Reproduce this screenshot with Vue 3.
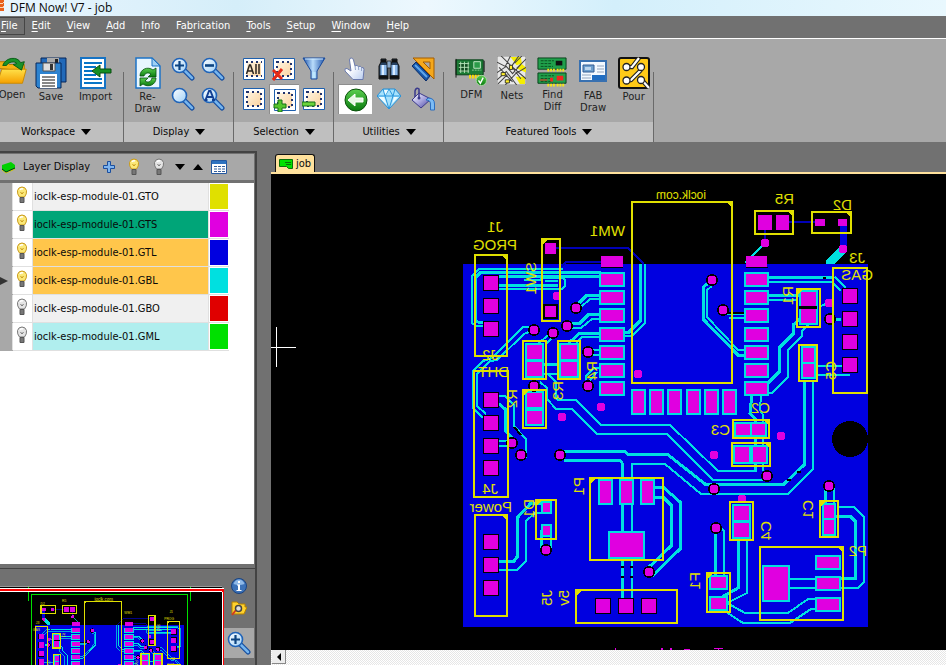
<script setup>
import { ref } from 'vue'

const menus = [
  ['', 'F', 'ile'], ['', 'E', 'dit'], ['', 'V', 'iew'], ['', 'A', 'dd'], ['', 'I', 'nfo'],
  ['Fa', 'b', 'rication'], ['', 'T', 'ools'], ['', 'S', 'etup'], ['', 'W', 'indow'], ['', 'H', 'elp']
]

const groups = [
  { name: 'Workspace', cls: 'workspace', big: [
    { icon: 'open', label: 'Open' }, { icon: 'save', label: 'Save' }, { icon: 'import', label: 'Import' }
  ] },
  { name: 'Display', cls: 'display', big: [{ icon: 'redraw', label: 'Re-Draw' }],
    small: ['zoom-in', 'zoom-out', 'zoom', 'zoom-all'] },
  { name: 'Selection', cls: 'selection', small: ['sel-all', 'sel-clear', 'filter', 'sel', 'sel-add', 'sel-sub'], active: 'sel-add' },
  { name: 'Utilities', cls: 'utilities', small: ['hand', 'binoculars', 'measure', 'back', 'gem', 'bucket'], active: 'back' },
  { name: 'Featured Tools', cls: 'featured', big: [
    { icon: 'dfm', label: 'DFM' }, { icon: 'nets', label: 'Nets' }, { icon: 'diff', label: 'Find Diff' },
    { icon: 'fab', label: 'FAB Draw' }, { icon: 'pour', label: 'Pour' }
  ] }
]

const layers = ref([
  { ext: 'GTO', on: true, row: '#f0f0f0', color: '#e0e000' },
  { ext: 'GTS', on: true, row: '#00a578', color: '#e000e0' },
  { ext: 'GTL', on: true, row: '#ffc64b', color: '#0000e0' },
  { ext: 'GBL', on: true, row: '#ffc64b', color: '#00e0e0', current: true },
  { ext: 'GBO', on: false, row: '#f0f0f0', color: '#e00000' },
  { ext: 'GML', on: false, row: '#b0eeee', color: '#00e000' }
])

// Component outlines: x1, y1, x2, y2, notch corner
const outlines = [
  [632, 202, 732, 383, 'r'], [475, 255, 507, 356, 'r'], [542, 239, 560, 321, 'l'],
  [755, 211, 793, 234, 'r'], [812, 212, 851, 233, 'r'], [833, 268, 867, 393, ''],
  [797, 289, 820, 327, 'l'], [799, 345, 817, 381, ''], [733, 420, 769, 438, 'r'],
  [732, 443, 770, 466, 'r'], [523, 341, 546, 379, ''], [558, 341, 580, 379, ''],
  [523, 390, 546, 428, 'l'], [474, 371, 508, 497, ''], [475, 515, 507, 616, 'r'],
  [536, 500, 556, 539, 'l'], [590, 478, 663, 560, 'l'], [576, 590, 677, 623, 'l'],
  [730, 502, 753, 540, ''], [707, 573, 730, 612, 'l'], [820, 501, 838, 537, 'l'],
  [760, 547, 843, 620, 'r']
]

// Surface-mount pads: x, y, w, h, clearance kind
const pads = [
  [545, 243, 11, 11, ''], [545, 306, 11, 11, 'k'],
  [758, 215, 14, 15, ''], [776, 215, 13, 15, ''], [815, 219, 10, 7, ''], [838, 219, 9, 7, ''],
  [801, 292, 15, 14, 'c'], [801, 309, 15, 14, 'c'],
  [527, 345, 15, 14, 'c'], [527, 362, 15, 14, 'c'], [561, 345, 16, 14, 'c'], [561, 362, 16, 14, 'c'],
  [527, 393, 15, 14, 'c'], [527, 411, 15, 13, 'c'],
  [803, 348, 11, 14, 'c'], [803, 364, 11, 13, 'c'],
  [736, 424, 14, 11, 'c'], [752, 424, 13, 11, 'c'], [735, 447, 14, 15, 'c'], [753, 447, 13, 15, 'c'],
  [543, 503, 7, 9, 'c'], [543, 526, 7, 9, 'c'],
  [600, 481, 11, 22, 'c'], [621, 481, 11, 22, 'c'], [642, 481, 11, 22, 'c'], [610, 533, 33, 24, 'c'],
  [734, 506, 15, 14, 'c'], [734, 523, 15, 14, 'c'],
  [711, 577, 15, 11, 'c'], [711, 598, 15, 11, 'c'],
  [824, 505, 10, 13, 'c'], [824, 520, 10, 14, 'c'],
  [764, 567, 24, 33, 'c'], [817, 557, 22, 11, 'c'], [817, 578, 22, 11, 'c'], [817, 599, 22, 11, 'c']
]
for (let i = 0; i < 8; i++) {
  pads.push([601, 256 + Math.round(i * 18.15), 22, 11, i ? 'c' : ''])
  pads.push([746, 256 + Math.round(i * 18.15), 21, 11, i ? 'c' : ''])
}
for (let i = 0; i < 6; i++) pads.push([633 + Math.round(i * 18.2), 391, 11, 22, 'c'])

// Header pins, by centre
const pins = [
  [491, 283], [491, 306], [491, 329], [491, 400], [491, 423], [491, 446], [491, 468],
  [491, 542], [491, 565], [491, 588], [850, 296], [850, 319], [850, 342], [850, 365],
  [603, 606], [626, 606], [649, 606]
]

// Vias: centre, isolated from the pour or not
const vias = [
  [765, 243], [843, 249], [712, 280, 1], [723, 310, 1], [829, 303], [830, 319, 1], [557, 296],
  [576, 308, 1], [567, 326, 1], [534, 330, 1], [553, 333, 1], [588, 352, 1], [588, 386, 1],
  [638, 374], [601, 407], [562, 417], [534, 386, 1], [512, 443, 1], [521, 455, 1], [560, 455, 1],
  [781, 436], [714, 455], [767, 476, 1], [714, 489, 1], [829, 486, 1], [742, 499], [716, 528, 1],
  [546, 550, 1], [649, 572, 1]
]

// Routed clearances: width, points
const traces = [
  [2, '563,269 479,269 472,276 472,323 476,326 484,326'],
  [3, '601,272 481,272 475,278 475,320 478,322 484,322'],
  [3, '499,276 600,276'],
  [3, '499,285 558,285'], [2, '499,289 562,289 565,286 565,280 562,277'],
  [2, '524,280 540,280 543,278 562,278'], [2, '545,281 558,281'],
  [3, '640,264 640,321 629,332 623,332'], [2, '645,264 645,323 632,336 623,336'],
  [3, '599,295 587,295 577,305'], [2, '599,299 590,299 580,308'],
  [3, '599,314 589,314 580,323 571,323'], [2, '599,319 592,319 581,328 571,328'],
  [3, '599,333 580,333 571,341'], [2, '599,337 582,337 576,343'],
  [2, '530,327 523,327 492,358 483,361 473,371 473,408 483,418'],
  [2, '531,331 524,334 497,360 490,361 477,374 477,406 486,414'],
  [2, '549,334 538,344'], [2, '553,337 545,345'], [2, '571,341 562,350'],
  [2, '593,350 600,350'], [2, '593,355 600,355'], [2, '586,380 586,376 594,368 600,368'],
  [2, '589,381 597,372'],
  [3, '542,364 562,364'], [2, '542,374 562,374'],
  [2, '548,374 556,382 556,397 558,400 576,400 601,425 670,425 718,471 757,471'],
  [2, '540,382 547,388 547,399 556,409 572,409 597,434 667,434 713,480 764,480'],
  [3, '564,451 624,451 628,454 667,454 705,484 784,484 804,465 804,381'],
  [3, '564,460 620,460 622,463 622,480'],
  [2, '632,480 632,464 665,464 701,494 788,494 813,469 813,381'],
  [3, '622,503 622,598'], [2, '632,503 632,598'],
  [3, '653,487 663,487 680,502 680,549 652,576'], [3, '653,497 663,497 671,505 671,546 648,568'],
  [2, '817,366 842,366'], [2, '815,375 850,375'],
  [3, '769,277 833,277'], [2, '835,277 846,288'], [2, '769,282 832,282 841,291'],
  [3, '769,295 800,295'], [2, '769,300 798,300'],
  [3, '802,317 793,325 793,334 779,348 779,372 768,383'],
  [2, '808,325 802,331 802,336 788,350 788,377 772,393 767,393'],
  [3, '710,282 703,287 703,319 738,355 746,355'], [2, '712,286 707,290 707,317 738,350 746,350'],
  [2, '727,314 744,314'], [2, '729,318 744,318'], [2, '821,306 828,303'], [3, '834,319 841,319'],
  [3, '752,394 750,413 755,419 755,471'], [2, '761,394 760,410 763,415 763,471'],
  [2, '499,396 505,396 514,405 514,426 526,439 526,458'], [3, '499,404 505,409 505,430 512,438'],
  [2, '499,441 507,441'], [2, '499,446 508,446'],
  [3, '499,561 514,561 517,557 517,518 531,503 543,503'], [2, '499,570 517,570 526,561 526,521 535,513 551,513'],
  [3, '541,530 541,549'], [2, '551,530 551,548'],
  [3, '738,540 738,588 722,597'], [2, '747,540 747,593 727,603 745,613 788,613 808,599 817,599'],
  [2, '723,610 743,623 790,623 811,609 817,609'],
  [3, '715,532 715,577'], [2, '720,527 724,531 724,577'],
  [2, '788,579 817,579'], [2, '788,588 817,588'],
  [3, '835,516 850,516 855,521 855,578 840,578'], [2, '837,507 854,507 864,517 864,582 858,588 840,588'],
  [3, '825,488 825,503'], [2, '834,488 834,503'], [2, '765,243 745,263']
]

// Silkscreen reference names; h = right edge + baseline, v = baseline x + top
const names = [
  ['h', 503, 232, 'J1'], ['h', 517, 250, 'PROG'], ['h', 625, 236, 'WM1'], ['h', 794, 204, 'R5'],
  ['h', 852, 210, 'D2'], ['h', 865, 263, 'J3'], ['h', 873, 280, 'GAS'], ['h', 770, 413, 'C2'],
  ['h', 730, 435, 'C3'], ['h', 498, 360, 'J2'], ['h', 509, 377, 'DHT'], ['h', 498, 494, 'J4'],
  ['h', 512, 512, 'Power'], ['h', 867, 556, 'P2'],
  ['v', 525, 262, 'SW1'], ['v', 782, 286, 'R1'], ['v', 825, 361, 'C5'], ['v', 506, 389, 'R2'],
  ['v', 552, 381, 'R3'], ['v', 586, 361, 'R4'], ['v', 573, 477, 'P1'], ['v', 523, 499, 'D1'],
  ['v', 541, 590, 'J5'], ['v', 558, 590, '5v'], ['v', 760, 521, 'C4'], ['v', 689, 572, 'F1'],
  ['v', 802, 500, 'C1']
]

const place = (n) => (n[0] === 'h' ? `matrix(-1 0 0 1 ${n[1]} ${n[2]})` : `matrix(0 1 1 0 ${n[1] + 11} ${n[2]})`)
const notch = (o) => (o[4] === 'r'
  ? `M${o[2] - 6} ${o[1]}H${o[2]}V${o[1] + 6}Z`
  : `M${o[0] + 6} ${o[1]}H${o[0]}V${o[1] + 6}Z`)
</script>

<template>
  <div class="app">
    <svg class="defs" aria-hidden="true">
      <defs>
        <linearGradient id="gBlue" x1="0" y1="0" x2="1" y2="1"><stop offset="0" stop-color="#fff" /><stop offset="1" stop-color="#9ed0f8" /></linearGradient>
        <linearGradient id="gFold" x1="0" y1="0" x2="0" y2="1"><stop offset="0" stop-color="#ffe14a" /><stop offset="1" stop-color="#f5a000" /></linearGradient>
        <linearGradient id="gGreen" x1="0" y1="0" x2="0" y2="1"><stop offset="0" stop-color="#5ccf50" /><stop offset="1" stop-color="#08790d" /></linearGradient>
        <linearGradient id="gPeach" x1="0" y1="0" x2="1" y2="1"><stop offset="0" stop-color="#fff4e0" /><stop offset="1" stop-color="#fbd3a0" /></linearGradient>
        <linearGradient id="gFun" x1="0" y1="0" x2="1" y2="0"><stop offset="0" stop-color="#1b50a8" /><stop offset=".45" stop-color="#b9ddfb" /><stop offset="1" stop-color="#1b50a8" /></linearGradient>
        <linearGradient id="gHand" x1="0" y1="0" x2="1" y2="1"><stop offset=".4" stop-color="#fff" /><stop offset="1" stop-color="#b9cdf0" /></linearGradient>
        <linearGradient id="gPail" x1="0" y1="0" x2="1" y2="1"><stop offset="0" stop-color="#fff" /><stop offset=".5" stop-color="#a9a6de" /><stop offset="1" stop-color="#3e3a98" /></linearGradient>

        <symbol id="glass" viewBox="0 0 24 24">
          <path d="M14 14l7 7" stroke="#174fa0" stroke-width="5" stroke-linecap="round" /><path d="M14 14l7 7" stroke="#75b5ee" stroke-width="2.500" stroke-linecap="round" />
          <circle cx="8.500" cy="8.500" r="7" fill="url(#gBlue)" stroke="#1f63b8" stroke-width="1.600" />
        </symbol>
        <symbol id="i-zoom" viewBox="0 0 24 24"><use href="#glass" /></symbol>
        <symbol id="i-zoom-in" viewBox="0 0 24 24"><use href="#glass" /><path d="M8.500 4v9M4 8.500h9" stroke="#0c4380" stroke-width="2.200" /></symbol>
        <symbol id="i-zoom-out" viewBox="0 0 24 24"><use href="#glass" /><path d="M4 8.500h9" stroke="#0c4380" stroke-width="2.600" /></symbol>
        <symbol id="i-zoom-all" viewBox="0 0 24 24"><use href="#glass" /><path d="M4.500 13L8 4h1.500l3.500 9M6.500 10h4.500M3.500 13h3M11 13h3" fill="none" stroke="#123f92" stroke-width="1.900" /></symbol>

        <symbol id="i-open" viewBox="4 0 28 32">
          <path d="M0 12V5h10l3 3h16v7z" fill="#f5b312" stroke="#b67a00" /><path d="M0 28L5 13h26l-4 15z" fill="url(#gFold)" stroke="#c98900" />
          <path d="M6 9C9 0 22-1 25 6l4-1-3 9-9-6 4-1C19 4 12 5 10 9z" fill="#18922a" stroke="#075c14" />
        </symbol>
        <symbol id="i-save" viewBox="0 0 32 32">
          <path d="M6 1h25v24H6z" fill="#2169b9" stroke="#06265a" /><path d="M12 1h12v8H12z" fill="#aaa" /><path d="M20 2h3v6h-3z" fill="#222" />
          <path d="M1 6h25v25H3l-2-2z" fill="#2d83d0" stroke="#06265a" /><path d="M8 6h12v8H8z" fill="#ddd" stroke="#555" /><path d="M15 7h3v6h-3z" fill="#333" />
          <path d="M5 17h17v14H5z" fill="#fff" /><path d="M7 20h13M7 23h13M7 26h13M7 29h13" stroke="#111" />
        </symbol>
        <symbol id="i-import" viewBox="0 0 32 32">
          <path d="M1 1h24v30H1z" fill="#fff" stroke="#1673c4" stroke-width="2" /><path d="M4 6h18M4 10h12M4 14h9M4 18h12M4 22h18M4 26h18" stroke="#0876c8" stroke-width="2" />
          <path d="M31 12v4H20v4l-8-6 8-6v4z" fill="#159023" stroke="#084d10" />
        </symbol>
        <symbol id="i-redraw" viewBox="0 0 26 32">
          <path d="M1 1h16l8 8v22H1z" fill="#e8f6ff" stroke="#1c73c6" stroke-width="1.500" /><path d="M17 1v8h8z" fill="#9fd0f5" stroke="#1c73c6" />
          <path d="M5 19c0-7 8-10 13-6l3-2v9h-8l3-3c-3-2-6-1-7 2z" fill="url(#gGreen)" stroke="#064f0e" stroke-width=".8" />
          <path d="M21 21c0 7-8 10-13 6l-3 2v-8h8l-3 3c3 2 6 1 7-3z" fill="url(#gGreen)" stroke="#064f0e" stroke-width=".8" />
        </symbol>

        <symbol id="i-sel" viewBox="0 0 24 24">
          <path d="M1.500 1.500h21v21h-21z" fill="#fff" stroke="#1d5fae" /><path d="M5 5h14v14H5z" fill="url(#gPeach)" />
          <path d="M5 5h14v14H5z" fill="none" stroke="#20336e" stroke-width="2" stroke-dasharray="2 3" />
        </symbol>
        <symbol id="i-sel-all" viewBox="0 0 24 24"><path d="M1.500 1.500h21v21h-21z" fill="#fff" stroke="#1d5fae" /><path d="M5 5h14v14H5z" fill="url(#gPeach)" /><path d="M4 5h16M4 19h16" fill="none" stroke="#20336e" stroke-width="2" stroke-dasharray="2 3" /><path d="M4.500 17L7.500 8h1l3 9M5.500 14h5M14 7v10M17 7v10" fill="none" stroke="#2b2520" stroke-width="1.500" /></symbol>
        <symbol id="i-sel-clear" viewBox="0 0 24 24"><use href="#i-sel" /><path d="M1 13l9 9M10 12L1 23" stroke="#e42a18" stroke-width="3" /></symbol>
        <symbol id="i-sel-add" viewBox="0 0 24 24"><use href="#i-sel" /><path d="M5 12h4v4h4v4H9v4H5v-4H1v-4h4z" fill="#55c52c" stroke="#167016" /></symbol>
        <symbol id="i-sel-sub" viewBox="0 0 24 24"><use href="#i-sel" /><path d="M0 15h13v4H0z" fill="#6bd33a" stroke="#167016" /></symbol>
        <symbol id="i-filter" viewBox="0 0 24 24"><path d="M1 1h22l-8 13v8H9v-8z" fill="url(#gFun)" stroke="#194a9c" /><path d="M3 2h18" stroke="#d4edff" /><path d="M10.500 15h3v6h-3z" fill="#bce7ff" /></symbol>

        <symbol id="i-hand" viewBox="0 0 24 24"><path d="M8 14L6.500 3q0-2 1.700-2t2.300 2l1.500 6q2-1.500 3.500.5 2-1 3 1 2.500-.5 2.500 2L20 22.500H10L2 14q-1-3 2-2.500z" fill="url(#gHand)" stroke="#6979ad" /><path d="M12 9l.5 4M15.500 10l.2 3M18.500 11v3" stroke="#93a5cc" /></symbol>
        <symbol id="i-binoculars" viewBox="0 0 24 24"><path d="M4 2h5v3l2 3v14H2V9l2-4zM15 2h5v3l2 4v13h-9V8l2-3z" fill="#27405f" stroke="#111" /><path d="M10 4h4v7h-4z" fill="#8aa9cb" stroke="#222" stroke-width=".8" /><path d="M6.500 8v10M17.500 8v10" stroke="#8db9ea" stroke-width="6" /><path d="M6 8v10M17 8v10" stroke="#d8ebff" stroke-width="2" /><path d="M2 20h9M13 20h9M4 4h5M15 4h5" stroke="#111" stroke-width="3" /></symbol>
        <symbol id="i-measure" viewBox="0 0 24 24"><path d="M2 1h21v21z" fill="#f5a81c" stroke="#a45c00" /><path d="M12 5h7v7z" fill="#a8a8a8" stroke="#a45c00" /><path d="M1 9l4-4 14 14-4 5z" fill="#1757a8" stroke="#082c6a" /><path d="M4 8l12 12" stroke="#60a7eb" stroke-width="2" /></symbol>
        <symbol id="i-back" viewBox="0 0 24 24"><circle cx="12" cy="12" r="11" fill="url(#gGreen)" stroke="#09500a" /><path d="M19 10v4h-8v4l-7-6 7-6v4z" fill="#e7f7e4" stroke="#fff" /></symbol>
        <symbol id="i-gem" viewBox="0 0 24 24"><path d="M6 2h12l6 7-12 13L0 9z" fill="#a6e2fd" stroke="#278fd5" /><path d="M6 2l2 7 4-7 4 7 2-7M0 9h24M8 9l4 13 4-13" fill="none" stroke="#2b96dc" /><path d="M7 3h4L8.500 8zM1.500 10H7l3 8zM17 10h4l-6 7z" fill="#effcff" /></symbol>
        <symbol id="i-bucket" viewBox="0 0 24 24"><path d="M8 6l12 6-10 9-9-8z" fill="url(#gPail)" stroke="#3c3a8c" /><path d="M4 10V4q1-4 4-2v9" fill="none" stroke="#39398c" stroke-width="1.500" /><circle cx="8" cy="11" r="1.500" fill="#39398c" /><path d="M17 11q6.500 0 6.500 6v6h-4v-6q0-4-4.500-4z" fill="#7cbcf5" stroke="#2b6ec0" /></symbol>

        <symbol id="i-dfm" viewBox="0 0 34 32">
          <path d="M1 3h29v16H1z" fill="#1b7c35" stroke="#064019" /><path d="M1 2v20M31 4v12" stroke="#111" />
          <path d="M4 6h11v10H4z" fill="#114b20" /><path d="M4 7h11M4 11h11M4 15h11M6 5v12M10 5v12M14 5v12" stroke="#b6e6ba" /><path d="M20 5h7v7h-7z" fill="#2a9b48" stroke="#c5ebc9" />
          <path d="M18 14h10" stroke="#8fd498" stroke-dasharray="2 1" /><path d="M15 21h11" stroke="#ffdf00" stroke-width="4" stroke-dasharray="2 1" /><circle cx="28" cy="25" r="5.500" fill="url(#gGreen)" stroke="#a6d8a0" /><path d="M25 25l2 3 3-6" fill="none" stroke="#fff" stroke-width="1.500" />
        </symbol>
        <symbol id="i-nets" viewBox="0 0 28 28">
          <path d="M0 0h28v28H0z" fill="#e8e8e8" stroke="#888" /><path d="M13 1h10l1 6-5 2zM19 12l4-5 5 4v5zM18 20h9v7h-5z" fill="#f5ee00" />
          <path d="M0 6l8 4 5-10M0 16l9-6 6 7 8-9M4 0l9 9 15 13M0 23l9-8 10 13M8 28l10-11 10-6M2 11l13 14M1 27l9-9M21 0l-7 10 9 12M24 0l-7 7M28 3l-9 9" fill="none" stroke="#444" />
          <path d="M4 16h4v3H4zM12 9h3v4h-3zM8 23h4v3H8z" fill="#ffef28" stroke="#222" stroke-width=".8" />
        </symbol>
        <symbol id="i-diff" viewBox="0 0 32 32">
          <path d="M1 1h30v12H1zM1 17h30v11H1z" fill="#20a04b" stroke="#063f19" /><path d="M4 4h14M4 7h12M4 10h13M4 20h14M4 23h10M4 26h12" stroke="#094e20" stroke-dasharray="3 1" />
          <path d="M20 4h7v5h-7z" fill="#111" /><path d="M21 20h7v5h-7zM3 24h8v1H3zM14 22h3v4h-3z" fill="#f02620" /><path d="M11 14h8M21 14h8M11 30h8M21 30h8" stroke="#f5e618" stroke-width="3" stroke-dasharray="2 1" />
        </symbol>
        <symbol id="i-fab" viewBox="0 0 28 22"><path d="M1 1h26v20H1z" fill="#f3f9ff" stroke="#3870b0" stroke-width="2" /><path d="M4 5h11v7H4z" fill="#6d9fce" stroke="#315a92" /><path d="M6 7h6v3H6z" fill="#bcd6ee" /><path d="M18 6h7M18 9h7M18 12h7M3 15h9M3 18h9" stroke="#93a5bd" /><path d="M13 15h13v5H13z" fill="#1f6dc2" /></symbol>
        <symbol id="i-pour" viewBox="0 0 32 32">
          <rect x="1" y="1" width="30" height="30" rx="2" fill="#ffca18" stroke="#111" stroke-width="2" />
          <g fill="none" stroke="#222" stroke-width="4.400"><path d="M9 10h5l7-9M8 24l5-1 10-10M23 22l8 9" /></g><g fill="none" stroke="#fff" stroke-width="2.200"><path d="M9 10h5l7-9M8 24l5-1 10-10M23 22l8 9" /></g>
          <g fill="#fff" stroke="#222" stroke-width="1.300"><circle cx="8.500" cy="10" r="3.500" /><circle cx="23" cy="10" r="3.500" /><circle cx="8.500" cy="23.500" r="3.500" /><circle cx="23" cy="23" r="3.500" /></g>
        </symbol>

        <symbol id="i-bulb-on" viewBox="0 0 12 18"><path d="M3.500 11Q1 8 1.500 4.500 2.500 1 6 1t4.500 3.500Q11 8 8.500 11z" fill="#fbe878" stroke="#c99a1a" /><path d="M4 4q1-2 3-1" stroke="#fff" stroke-width="1.500" fill="none" /><path d="M4.500 6L6 8l1.500-2" fill="none" stroke="#c99a1a" /><path d="M4 11.500h4v5H4z" fill="#777" stroke="#555" /></symbol>
        <symbol id="i-bulb-off" viewBox="0 0 12 18"><path d="M3.500 11Q1 8 1.500 4.500 2.500 1 6 1t4.500 3.500Q11 8 8.500 11z" fill="#e4e4e4" stroke="#777" /><path d="M4 4q1-2 3-1" stroke="#fff" stroke-width="1.500" fill="none" /><path d="M4.500 6L6 8l1.500-2" fill="none" stroke="#777" /><path d="M4 11.500h4v5H4z" fill="#777" stroke="#555" /></symbol>

        <g id="pcb" shape-rendering="crispEdges">
          <rect class="blue" x="463" y="264" width="405" height="363" />
          <rect x="633" y="203" width="98" height="61" />
          <circle cx="850" cy="439" r="18" />
          <path class="track" d="M556 248h72l16 16M601 262h-35l-5 5M789 222h27M765 230v13" />
          <path class="blue" d="M840 226h7v22h-7z" />
          <path class="cyan" d="M841 245l6 6-13 13h-8v-4z" />
          <polyline v-for="(t, i) in traces" :key="'t' + i" class="trace" :points="t[1]" :stroke-width="t[0]" />
          <path d="M621 567h3M630 567h3M621 577h3M630 577h3M787 480h4M797 472h4M823 278h3M514 427l7 8M726 313h18" stroke="#000" stroke-width="2" />
          <g v-for="(p, i) in pads" :key="'p' + i">
            <rect v-if="p[4]" :class="p[4] === 'c' ? 'cyan' : 'dark'" :x="p[0] - 2" :y="p[1] - 2" :width="p[2] + 4" :height="p[3] + 4" />
          </g>
          <path d="M799 306h18v3h-18zM601 267h22v1h-22zM746 267h22v1h-22z" />
          <rect v-for="(p, i) in pads" :key="'q' + i" class="mag" :x="p[0]" :y="p[1]" :width="p[2]" :height="p[3]" />
          <g v-for="(p, i) in pins" :key="'n' + i">
            <rect :x="p[0] - 8" :y="p[1] - 8" width="16" height="16" /><rect class="mag" :x="p[0] - 7" :y="p[1] - 7" width="14" height="14" />
          </g>
          <g v-for="(v, i) in vias" :key="'v' + i">
            <circle v-if="v[2]" :cx="v[0]" :cy="v[1]" r="6" /><circle class="mag" :cx="v[0]" :cy="v[1]" r="4.500" />
          </g>
          <g v-for="(o, i) in outlines" :key="'o' + i">
            <rect class="silk" :x="o[0]" :y="o[1]" :width="o[2] - o[0]" :height="o[3] - o[1]" />
            <path v-if="o[4]" class="yellow" :d="notch(o)" />
          </g>
          <g class="names">
            <text v-for="n in names" :key="n[3]" :transform="place(n)">{{ n[3] }}</text>
            <text class="mini" transform="matrix(-1 0 0 1 706 199)">ioclk.com</text>
          </g>
        </g>
      </defs>
    </svg>

    <header class="title"><i class="logo"></i><h1>DFM Now! V7 - job</h1></header>

    <nav class="menu">
      <button v-for="(m, i) in menus" :key="i" :class="{ open: i === 0 }">{{ m[0] }}<u>{{ m[1] }}</u>{{ m[2] }}</button>
    </nav>

    <div class="ribbon">
      <section v-for="g in groups" :key="g.name" class="group" :class="g.cls">
        <div class="tools">
          <button v-for="b in g.big" :key="b.icon" class="big" :class="b.icon">
            <svg><use :href="'#i-' + b.icon" /></svg><span>{{ b.label }}</span>
          </button>
          <div v-if="g.small" class="smalls">
            <button v-for="s in g.small" :key="s" :class="{ active: s === g.active }" :aria-label="s"><svg><use :href="'#i-' + s" /></svg></button>
          </div>
        </div>
        <button class="caption">{{ g.name }}<i class="down"></i></button>
      </section>
    </div>

    <main class="work">
      <aside class="side">
        <div class="side-head">
          <svg class="stack" viewBox="0 0 14 14"><path d="M0 8l4 3 9-4v2l-9 4-4-3z" fill="#00d0e0" /><path d="M0 10l4 3 9-4" fill="none" stroke="#ddc400" /><path d="M0 5l9-3 4 3v3l-9 4-4-3z" fill="#00d000" /><path d="M0 9l4 3 9-4" fill="none" stroke="#073807" /></svg>
          <h2>Layer Display</h2>
          <button class="plus" aria-label="Add layer"><svg viewBox="0 0 12 12"><path d="M4.500.5h3v4h4v3h-4v4h-3v-4h-4v-3h4z" fill="#7eb5f0" stroke="#1b4e9e" /></svg></button>
          <button class="lamp" aria-label="All on"><svg><use href="#i-bulb-on" /></svg></button>
          <button class="lamp" aria-label="All off"><svg><use href="#i-bulb-off" /></svg></button>
          <button class="arrow" aria-label="Move down"><i class="down"></i></button>
          <button class="arrow" aria-label="Move up"><i class="up"></i></button>
          <button class="sheet" aria-label="Layer table"><svg viewBox="0 0 16 14"><path d="M.5.500h15v13H.5z" fill="#fff" stroke="#2458a0" /><path d="M1 1h14v3H1z" fill="#2e73c0" /><path d="M3 6.500h11M3 9h11M3 11.500h11" stroke="#345e9c" stroke-dasharray="3 1" /></svg></button>
        </div>
        <div class="list">
          <table>
            <tbody>
              <tr v-for="l in layers" :key="l.ext">
                <td class="mark"><i v-if="l.current"></i></td>
                <td class="bulb"><button :aria-label="'Show ' + l.ext" @click="l.on = !l.on"><svg><use :href="l.on ? '#i-bulb-on' : '#i-bulb-off'" /></svg></button></td>
                <td class="name" :style="{ backgroundColor: l.row }">ioclk-esp-module-01.{{ l.ext }}</td>
                <td class="swatch"><i :style="{ backgroundColor: l.color }"></i></td>
              </tr>
            </tbody>
          </table>
        </div>
        <div class="navigator">
          <svg class="overview" viewBox="0 0 224 79" preserveAspectRatio="xMinYMin slice" shape-rendering="crispEdges">
            <path d="M0 0h222v79H0z" />
            <path d="M28.500 0v15M190.500 0v15M31.500 79V8.500h156V79" fill="none" stroke="#00e000" />
            <use class="tiny" href="#pcb" transform="matrix(-.369 0 0 .37 355 -59)" />
            <path d="M0 0h222v1H0z" fill="#999" /><path d="M0 2h223v4H0z" fill="#fff" /><path d="M0 3h223v2H0z" fill="#f00" />
            <path d="M222 2h2v77h-2z" fill="#fff" /><path d="M223 6h1v73h-1zM222 3h2v3h-2z" fill="#f00" />
          </svg>
          <div class="nav-tools">
            <button aria-label="Information"><svg viewBox="0 0 16 16"><circle cx="8" cy="8" r="7.500" fill="#3c72b8" stroke="#1a4380" /><path d="M2.500 6Q4 1.500 8 1.500T13.500 6Q8 8 2.500 6" fill="#8fb9e8" /><path d="M7 3h2v2H7zM6 6.500h3V12h1.500v1h-5v-1H7V7.500H6z" fill="#fff" /></svg></button>
            <button aria-label="Find file"><svg viewBox="0 0 16 16"><path d="M1 2h5l2 2h6v3h2l-3 7H1z" fill="#ffd22e" stroke="#b58100" /><path d="M1 15l4-5" stroke="#d33a20" stroke-width="2" /><circle cx="7.500" cy="8.500" r="3" fill="#ddd" stroke="#444" stroke-width="1.500" /></svg></button>
            <button class="active" aria-label="Zoom view"><svg><use href="#i-zoom-in" /></svg></button>
          </div>
        </div>
      </aside>

      <section class="doc">
        <div class="tabs"><button><svg viewBox="0 0 14 12"><path d="M.5 1.500h13v9h-4l-2-2h-7z" fill="#00e000" stroke="#087008" /><path d="M6 4.500h6M7 6.500h5" stroke="#087008" /></svg>job</button></div>
        <div class="canvas">
          <svg viewBox="271 174 675 476" preserveAspectRatio="xMinYMin slice">
            <use href="#pcb" />
            <path d="M271 347.500h25M276.500 327v40" stroke="#fff" shape-rendering="crispEdges" />
            <path d="M615 648h1v2h-1zM661 648h2v2h-2zM670 648h2v2h-2zM684 649h6v1h-6zM714 648h9v1h-9zM718 648h1v2h-1z" fill="#e000e0" />
          </svg>
        </div>
        <div class="scroll"><button aria-label="Scroll left"><i></i></button></div>
      </section>
    </main>
  </div>
</template>

<style>
body { overflow: hidden; }
</style>

<style scoped>
.app { display: flex; flex-direction: column; height: 100vh; background: #717171; color: #0a0a0a; font: 11px/14px "DejaVu Sans Condensed", "Noto Sans", sans-serif; overflow: hidden; }
.defs { position: absolute; width: 0; height: 0; }
button { font: inherit; color: inherit; background: none; border: 0; padding: 0; margin: 0; }
button svg { display: block; }
h1, h2 { margin: 0; font-weight: 400; font-size: inherit; }

.title { display: flex; flex: none; height: 16px; background: linear-gradient(90deg, #e8f5fe, #d5eef9 25%, #edf8fe 45%, #d3effb 65%, #e9f8fe); }
.title h1 { font: 12px/16px "Noto Sans", "Open Sans", sans-serif; line-height: 16px; margin-left: 6px; font-family: "Open Sans", sans-serif; }
.logo { width: 4px; height: 11px; background: repeating-linear-gradient(170deg, #e8601c 0 3px, #fbd3b8 3px 4px); }

.menu { display: flex; flex: none; align-items: flex-start; height: 22px; background: #717171; border-bottom: 1px solid #fff; color: #fff; }
.menu button { height: 18px; padding: 0 8px; box-sizing: border-box; line-height: 18px; border-right: 1px solid transparent; margin-top: 1px; margin-right: -1px; }
.menu .open { margin-left: -8px; padding-right: 6px; border: 1px solid #454545; line-height: 16px; }
.menu u { text-underline-offset: 2px; }

.ribbon { display: flex; height: 103px; background: #a8a8a8; border-bottom: 2px solid #717171; flex: none; }
.group { position: relative; display: flex; flex-direction: column; }
.group::after { content: ""; position: absolute; right: 0; top: 33px; bottom: 0; width: 1px; background: #6a6a6a; }
.workspace { width: 124px; }
.display, .utilities { width: 110px; }
.selection { width: 100px; }
.featured { width: 210px; }
.tools { flex: 1; display: flex; padding-top: 15px; box-sizing: border-box; }
.caption { display: flex; align-items: center; justify-content: center; gap: 6px; height: 20px; background: #bfbfbf; }
.workspace .caption { padding-right: 12px; }
.down, .up { display: block; width: 0; height: 0; border: 5px solid transparent; }
.down { border-top: 6px solid #000; border-bottom: 0; }
.up { border-bottom: 6px solid #000; border-top: 0; }
.big { display: flex; flex-direction: column; align-items: center; justify-content: flex-start; font: 10px/12px "DejaVu Sans", sans-serif; color: #222; width: 41px; }
.big svg { width: 32px; height: 32px; margin: 3px 0 2px; }
.workspace .tools { gap: 4px; }
.big.open { width: 28px; }
.big.open span { margin-left: -4px; }
.big.open svg { width: 28px; height: 30px; }
.big.save { width: 38px; }
.big.import { width: 43px; }
.display .tools { padding-left: 3px; }
.big.redraw svg { width: 26px; }
.big.fab svg { width: 28px; height: 22px; margin: 6px 0 8px; }
.big.nets svg { width: 29px; height: 29px; margin: 2px 0 5px; }
.featured .big svg { flex: none; }
.featured .tools { padding-left: 7px; }
.big.dfm svg { width: 34px; height: 30px; }
.big.diff svg { height: 30px; }
.smalls { display: grid; grid-template-columns: repeat(3, 30px); grid-auto-rows: 30px; height: 60px; }
.display .smalls { grid-template-columns: repeat(2, 30px); }
.selection .smalls { margin-left: 5px; }
.utilities .smalls { grid-template-columns: repeat(3, 34px); margin-left: 4px; }
.smalls button { display: flex; align-items: center; justify-content: center; }
.smalls svg { width: 24px; height: 24px; }
.smalls .active { background: #fff; border: solid #8d8d8d; border-width: 1px 0 0 1px; }

.work { flex: 1; min-height: 0; display: flex; }
.side { flex: none; width: 255px; display: flex; flex-direction: column; margin-top: 7px; border-top: 2px solid #434343; border-right: 2px solid #434343; }
.side-head { display: flex; align-items: center; height: 26px; margin: 1px 1px 3px 0; padding-left: 2px; background: #a8a8a8; }
.side-head h2 { width: 80px; margin-left: 7px; white-space: nowrap; }
.stack { width: 14px; height: 14px; }
.plus svg { width: 12px; height: 12px; }
.lamp svg { width: 12px; height: 18px; }
.lamp { margin-left: 13px; }
.arrow { margin-left: 8px; }
.lamp + .arrow { margin-left: 10px; }
.sheet { margin-left: 8px; }
.sheet svg { width: 16px; height: 14px; }
.list { flex: 1; min-height: 0; background: #fff; margin-right: 1px; }
table { border-collapse: collapse; }
td { padding: 0; height: 27px; border-bottom: 1px solid #e0e0e0; }
.mark { width: 12px; background: #a8a8a8; border-right: 1px solid #e0e0e0; border-bottom-color: #a8a8a8; }
.mark i { display: block; border: 4px solid transparent; border-left: 8px solid #333; border-right: 0; }
.bulb { width: 19px; border-right: 1px solid #e0e0e0; }
.bulb svg { width: 12px; height: 18px; margin: 0 3px; }
.name { width: 174px; padding-left: 1px; border-right: 1px solid #e0e0e0; }
.swatch { width: 19px; padding-left: 1px; }
.swatch i { display: block; width: 18px; height: 25px; }
.navigator { display: flex; height: 96px; margin-top: 4px; border-top: 1px solid #434343; }
.overview { width: 224px; height: 79px; margin-top: 17px; }
.tiny { --outline: 3px; --name-size: 9px; }
.nav-tools { display: flex; flex-direction: column; flex: 1; margin: 9px 1px 0 0; }
.nav-tools button { display: flex; justify-content: center; height: 22px; }
.nav-tools svg { width: 16px; height: 16px; }
.nav-tools .active { margin-top: 6px; height: 30px; align-items: center; background: #a8a8a8; }
.nav-tools .active svg { width: 24px; height: 24px; }

.doc { flex: 1; min-width: 0; display: flex; flex-direction: column; margin-left: 14px; }
.tabs { height: 30px; display: flex; align-items: flex-end; padding-left: 4px; box-sizing: border-box; border-bottom: 2px solid #ffe19c; }
.tabs button { display: flex; align-items: center; gap: 3px; height: 18px; padding: 0 3px; background: #ffe19c; border: 1px solid #111; border-bottom: 0; border-radius: 3px 3px 0 0; }
.tabs svg { width: 14px; height: 12px; }
.canvas { flex: 1; min-height: 0; background: #000; overflow: hidden; }
.canvas svg { display: block; width: 100%; height: 100%; }
.scroll { height: 15px; background: repeating-conic-gradient(#e6e6e6 0 25%, #fff 0 50%) 0 0 / 2px 2px; }
.scroll button { display: flex; align-items: center; justify-content: center; width: 14px; height: 14px; margin-left: 1px; background: #ececec; border: solid #888; border-width: 0 1px 1px 0; }
.scroll i { border: 4px solid transparent; border-right: 4px solid #000; border-left: 0; }

.blue { fill: #0000e0; }
.cyan { fill: #00e0e0; }
.mag { fill: #e000e0; }
.dark { fill: #000; }
.yellow { fill: #e0e000; }
.track { fill: none; stroke: #0000b8; stroke-width: 2; }
.trace { fill: none; stroke: #00e0e0; }
.silk { fill: none; stroke: #e0e000; stroke-width: var(--outline, 2px); }
.names { fill: #e0e000; font-family: "Liberation Sans", sans-serif; font-size: var(--name-size, 15px); }
.mini { font-size: 12px; }
</style>
